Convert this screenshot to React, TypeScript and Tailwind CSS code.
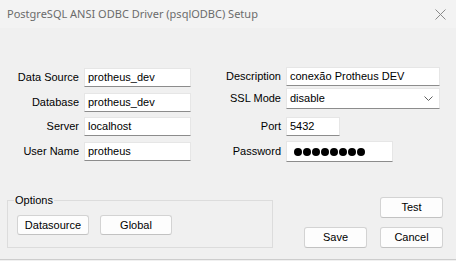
const ui = { fontFamily: '"Liberation Sans", Arial, sans-serif' };

function Field({ label, w, children, h = 'h-[19px]', mt = '' }: { label: string; w: string; children: React.ReactNode; h?: string; mt?: string }) {
  return (
    <div className={`flex items-center ${mt}`}>
      <div className="w-[79px] text-right text-[11px] text-black whitespace-nowrap">{label}</div>
      <div className={`ml-[5px] ${w} ${h} bg-white border border-[#e6e6e6] border-b-[#8c8c8c] flex items-center pl-[3px] text-[11px] text-black`}>
        {children}
      </div>
    </div>
  );
}

function Btn({ label, w = 'w-[63px]', h = 'h-[21px]' }: { label: string; w?: string; h?: string }) {
  return (
    <div className={`${w} ${h} bg-[#fdfdfd] border border-[#d3d3d3] border-b-[#c2c2c2] rounded-[3px] flex items-center justify-center text-[11px] text-black`}>
      {label}
    </div>
  );
}

export default function App() {
  return (
    <div style={ui} className="w-[456px] h-[261px] bg-[#f0f0f0] flex flex-col overflow-hidden">
      <div className="h-[28px] bg-[#f3f3f3] flex items-center pl-[7px] pr-[10px]">
        <span style={{ fontFamily: '"Noto Sans", "Open Sans", sans-serif' }} className="text-[11px] text-[#6b6b6b]">
          PostgreSQL ANSI ODBC Driver (psqlODBC) Setup
        </span>
        <svg className="ml-auto" width="11" height="11" viewBox="0 0 11 11">
          <path d="M0.5 0.5L10.5 10.5M10.5 0.5L0.5 10.5" stroke="#8a8a8a" strokeWidth="1" />
        </svg>
      </div>

      <div className="flex-1 border-b border-[#cdcdcd]">
        <div className="flex items-start pt-[39px] h-[137px]">
          <div className="pt-[1px]">
            <Field label="Data Source" w="w-[107px]">protheus_dev</Field>
            <Field label="Database" w="w-[107px]" mt="mt-[6px]">protheus_dev</Field>
            <Field label="Server" w="w-[107px]" mt="mt-[5px]">localhost</Field>
            <Field label="User Name" w="w-[107px]" mt="mt-[6px]">protheus</Field>
          </div>
          <div className="ml-[11px]">
            <Field label="Description" w="w-[154px]">conexão Protheus DEV</Field>
            <Field label="SSL Mode" w="w-[154px]" h="h-[21px]" mt="mt-[2px]">
              <span>disable</span>
              <svg className="ml-auto mr-[6px]" width="9" height="5" viewBox="0 0 9 5">
                <path d="M0.5 0.5L4.5 4.5L8.5 0.5" stroke="#606060" strokeWidth="1" fill="none" />
              </svg>
            </Field>
            <Field label="Port" w="w-[54px]" mt="mt-[8px]">5432</Field>
            <Field label="Password" w="w-[107px]" h="h-[21px]" mt="mt-[5px]">
              <div className="flex pl-[3px]">
                {Array.from({ length: 8 }).map((_, i) => (
                  <span key={i} className="w-[9px] h-[9px] flex items-center justify-center">
                    <span className="w-[8px] h-[8px] rounded-full bg-black" />
                  </span>
                ))}
              </div>
            </Field>
          </div>
        </div>

        <div className="flex items-start pl-[7px] pr-[13px]">
          <fieldset className="mt-[28px] w-[266px] h-[55px] border border-[#dcdcdc]">
            <legend className="ml-[6px] px-[1px] text-[11px] leading-[14px] text-black">Options</legend>
            <div className="flex gap-[11px] mt-[8px] pl-[9px]">
              <Btn label="Datasource" w="w-[72px]" h="h-[20px]" />
              <Btn label="Global" w="w-[72px]" h="h-[20px]" />
            </div>
          </fieldset>
          <div className="ml-auto mt-[32px] flex flex-col items-end">
            <Btn label="Test" />
            <div className="flex gap-[13px] mt-[9px]">
              <Btn label="Save" />
              <Btn label="Cancel" />
            </div>
          </div>
        </div>
      </div>
      <div className="h-[1px] bg-[#f0f0f0]" />
    </div>
  );
}
